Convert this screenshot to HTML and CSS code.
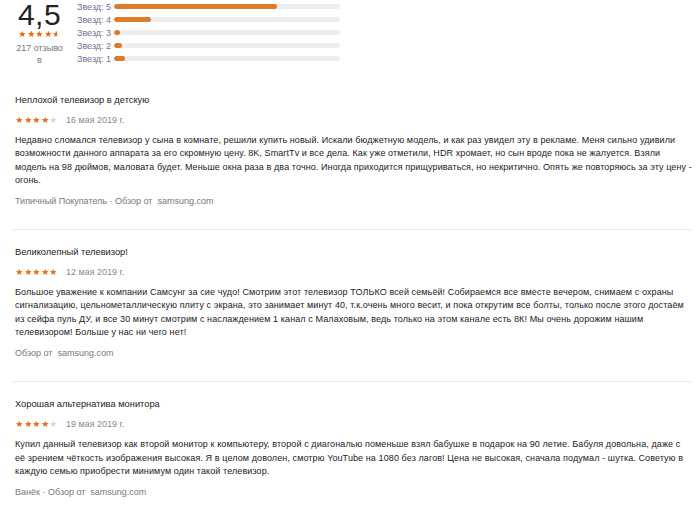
FILE: index.html
```html
<!DOCTYPE html>
<html lang="ru">
<head>
<meta charset="utf-8">
<link rel="stylesheet" href="styles.css">
</head>
<body>
<svg class="defs" width="0" height="0" aria-hidden="true">
  <defs>
    <symbol id="star" viewBox="0 0 24 24"><path d="M12 2.2l2.9 6.6 7.1.6-5.4 4.7 1.6 7-6.2-3.7-6.2 3.7 1.6-7L2 9.4l7.1-.6z"/></symbol>
    <linearGradient id="halfg" x1="0" x2="1" y1="0" y2="0">
      <stop offset="0.55" stop-color="#e7711b"/><stop offset="0.55" stop-color="#d9d9d9"/>
    </linearGradient>
  </defs>
</svg>
<div class="page">
  <section class="summary">
    <div class="score">
      <div class="score-num">4,5</div>
      <div class="stars small">
        <svg class="st"><use href="#star"/></svg><svg class="st"><use href="#star"/></svg><svg class="st"><use href="#star"/></svg><svg class="st"><use href="#star"/></svg><svg class="st half"><use href="#star"/></svg>
      </div>
      <div class="count">217 отзыво<br>в</div>
    </div>
    <div class="dist">
      <div class="row"><span class="lbl">Звезд: 5</span><div class="track"><div class="fill" style="width:72%"></div></div></div>
      <div class="row"><span class="lbl">Звезд: 4</span><div class="track"><div class="fill" style="width:16.5%"></div></div></div>
      <div class="row"><span class="lbl">Звезд: 3</span><div class="track"><div class="fill" style="width:2.8%"></div></div></div>
      <div class="row"><span class="lbl">Звезд: 2</span><div class="track"><div class="fill" style="width:3.6%"></div></div></div>
      <div class="row"><span class="lbl">Звезд: 1</span><div class="track"><div class="fill" style="width:5%"></div></div></div>
    </div>
  </section>

  <article class="review">
    <div class="title">Неплохой телевизор в детскую</div>
    <div class="meta"><span class="stars"><svg class="st"><use href="#star"/></svg><svg class="st"><use href="#star"/></svg><svg class="st"><use href="#star"/></svg><svg class="st"><use href="#star"/></svg><svg class="st off"><use href="#star"/></svg></span><span class="date">16 мая 2019 г.</span></div>
    <p class="text">Недавно сломался телевизор у сына в комнате, решили купить новый. Искали бюджетную модель, и как раз увидел эту в рекламе. Меня сильно удивили возможности данного аппарата за его скромную цену. 8K, SmartTv и все дела. Как уже отметили, HDR хромает, но сын вроде пока не жалуется. Взяли модель на 98 дюймов, маловата будет. Меньше окна раза в два точно. Иногда приходится прищуриваться, но некритично. Опять же повторяюсь за эту цену - огонь.</p>
    <div class="src">Типичный Покупатель · Обзор от &nbsp;samsung.com</div>
  </article>

  <article class="review">
    <div class="title">Великолепный телевизор!</div>
    <div class="meta"><span class="stars"><svg class="st"><use href="#star"/></svg><svg class="st"><use href="#star"/></svg><svg class="st"><use href="#star"/></svg><svg class="st"><use href="#star"/></svg><svg class="st"><use href="#star"/></svg></span><span class="date">12 мая 2019 г.</span></div>
    <p class="text">Большое уважение к компании Самсунг за сие чудо! Смотрим этот телевизор ТОЛЬКО всей семьёй! Собираемся все вместе вечером, снимаем с охраны сигнализацию, цельнометаллическую плиту с экрана, это занимает минут 40, т.к.очень много весит, и пока открутим все болты, только после этого достаём из сейфа пуль ДУ, и все 30 минут смотрим с наслаждением 1 канал с Малаховым, ведь только на этом канале есть 8К! Мы очень дорожим нашим телевизором! Больше у нас ни чего нет!</p>
    <div class="src">Обзор от &nbsp;samsung.com</div>
  </article>

  <article class="review last">
    <div class="title">Хорошая альтернатива монитора</div>
    <div class="meta"><span class="stars"><svg class="st"><use href="#star"/></svg><svg class="st"><use href="#star"/></svg><svg class="st"><use href="#star"/></svg><svg class="st"><use href="#star"/></svg><svg class="st off"><use href="#star"/></svg></span><span class="date">19 мая 2019 г.</span></div>
    <p class="text">Купил данный телевизор как второй монитор к компьютеру, второй с диагональю поменьше взял бабушке в подарок на 90 летие. Бабуля довольна, даже с её зрением чёткость изображения высокая. Я в целом доволен, смотрю YouTube на 1080 без лагов! Цена не высокая, сначала подумал - шутка. Советую в каждую семью приобрести минимум один такой телевизор.</p>
    <div class="src">Ванёк · Обзор от &nbsp;samsung.com</div>
  </article>
</div>
</body>
</html>
```

FILE: styles.css
```css
* { box-sizing: border-box; }
html, body { margin: 0; padding: 0; background: #fff; }
body {
  font-family: "Liberation Sans", Arial, sans-serif;
  color: #222;
  font-size: 9px;
}
.defs { position: absolute; width: 0; height: 0; }
.page { padding: 0 8px 0 15px; }

.summary {
  display: flex;
  align-items: flex-start;
  height: 89px;
  padding-top: 1px;
}
.score {
  width: 49px;
  display: flex;
  flex-direction: column;
  align-items: center;
}
.score-num {
  font-size: 30px;
  line-height: 27px;
  color: #222;
  letter-spacing: 0.5px;
}
.stars { display: flex; fill: #e7711b; }
.st { width: 8.6px; height: 8px; display: block; }
.st.off { fill: #d9d9d9; }
.st.half { fill: url(#halfg); }
.stars.small { margin-top: 2px; }
.count {
  margin-top: 4px;
  font-size: 9px;
  line-height: 12px;
  color: #777;
  text-align: center;
}

.dist {
  margin-left: 13px;
  margin-top: -1px;
  display: flex;
  flex-direction: column;
}
.row {
  display: flex;
  align-items: center;
  height: 13px;
}
.lbl {
  width: 37px;
  font-size: 9px;
  color: #6f7394;
  white-space: nowrap;
}
.track {
  width: 226px;
  height: 5px;
  border-radius: 3px;
  background: #eeeeee;
  overflow: hidden;
}
.fill {
  height: 100%;
  background: #df7a28;
  border-radius: 3px;
}

.review {
  border-bottom: 1px solid #ececec;
  margin-left: -3px;
  padding-left: 3px;
}
.review.last { border-bottom: none; }
.title {
  font-size: 9.3px;
  line-height: 14px;
  color: #222;
  margin-top: 4px;
}
.review + .review .title { margin-top: 15px; }
.meta {
  display: flex;
  align-items: center;
  margin-top: 6px;
  height: 14px;
}
.meta .stars { width: 51px; }
.date { color: #888; font-size: 9px; }
.text {
  margin: 7px 0 0;
  line-height: 13.3px;
  letter-spacing: 0.1px;
}
.src {
  margin-top: 7px;
  color: #777;
  font-size: 9px;
  line-height: 14px;
  padding-bottom: 21px;
}
```
